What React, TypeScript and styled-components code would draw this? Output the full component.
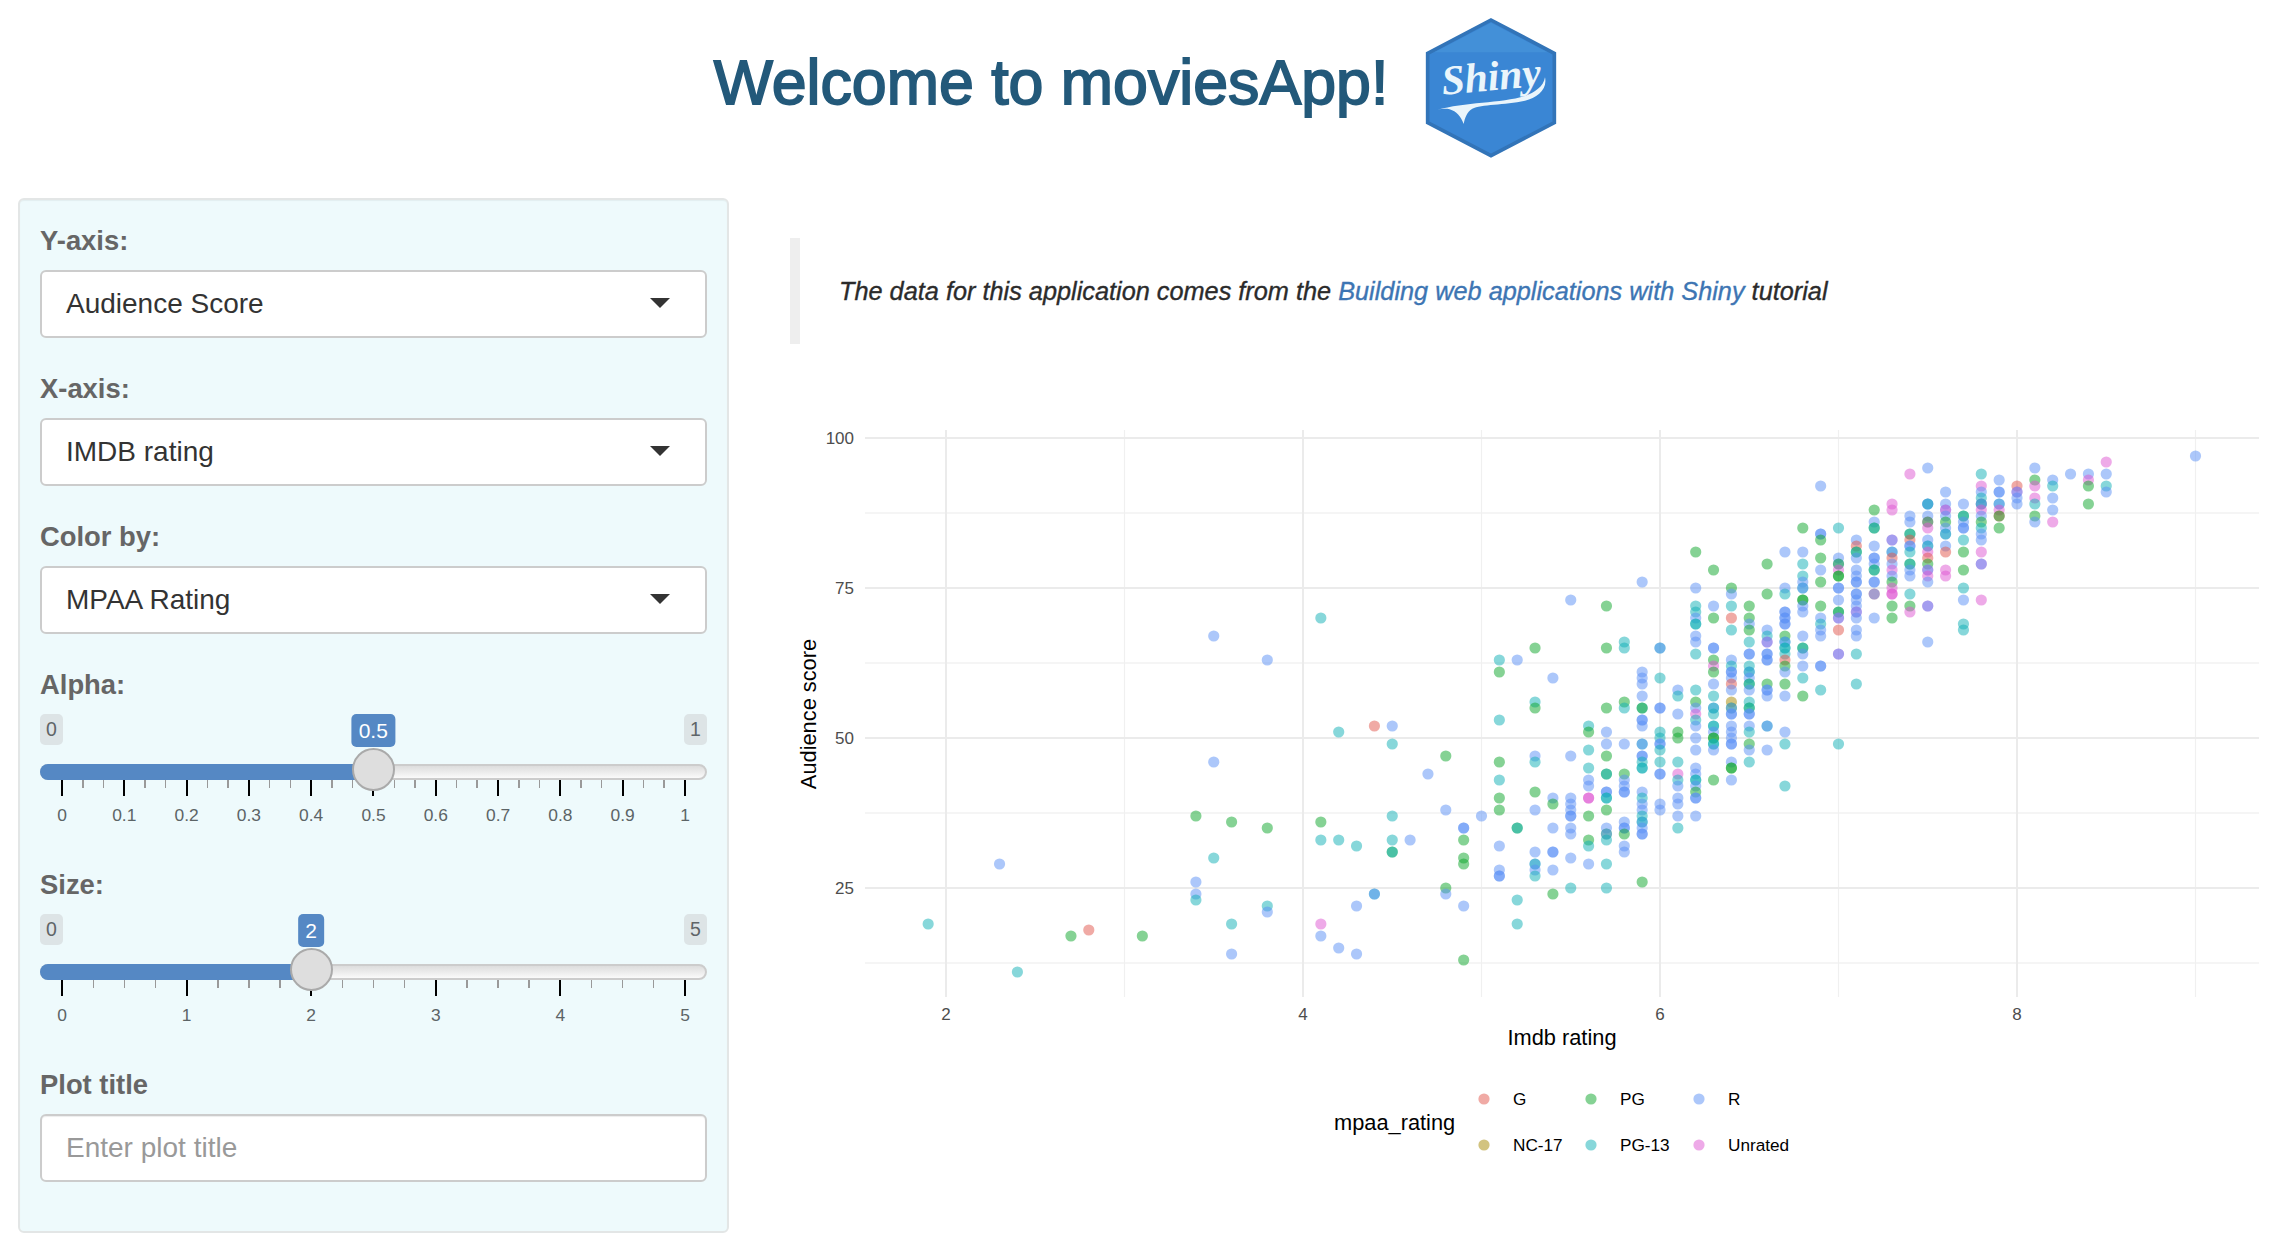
import React from "react";
import styled, { createGlobalStyle } from "styled-components";

const Global = createGlobalStyle`
  html, body { margin: 0; padding: 0; background: #fff; }
  body { font-family: "Liberation Sans", Arial, sans-serif; color: #333; }
`;

const Page = styled.div`
  width: 2276px;
  height: 1250px;
  overflow: hidden;
`;
const Header = styled.header`
  height: 198px;
  display: flex;
  justify-content: center;
  align-items: flex-start;
  gap: 31px;
  padding-right: 3px;
  box-sizing: border-box;
`;
const Title = styled.h1`
  margin: 45px 0 0;
  padding: 0 2px;
  font-size: 62.7px;
  line-height: 74px;
  font-weight: 400;
  color: #23597a;
  -webkit-text-stroke: 1.8px #23597a;
  white-space: nowrap;
`;
const LogoSvg = styled.svg`
  width: 140px;
  height: 148px;
  margin-top: 14px;
  flex: none;
`;
const Main = styled.main`
  display: flex;
  align-items: flex-start;
`;
const Panel = styled.aside`
  flex: none;
  width: 711px;
  height: 1035px;
  margin-left: 18px;
  box-sizing: border-box;
  padding: 24px 20px 0 20px;
  background: #eefafc;
  border: 2px solid #e3e6e6;
  border-radius: 6px;
  box-shadow: inset 0 1px 1px rgba(0, 0, 0, 0.05);
`;
const Label = styled.div`
  height: 34px;
  line-height: 34px;
  font-size: 27.4px;
  font-weight: 700;
  color: #666;
  margin-bottom: 12px;
`;
const Field = styled.div`
  margin-bottom: 34px;
`;
const Select = styled.div`
  height: 68px;
  box-sizing: border-box;
  border: 2px solid #ccc;
  border-radius: 6px;
  background: #fff;
  padding: 0 35px 0 24px;
  display: flex;
  align-items: center;
  justify-content: space-between;
  font-size: 28px;
  color: #333;
`;
const Caret = styled.span`
  width: 0;
  height: 0;
  margin: 0 0 2px;
  border-left: 10px solid transparent;
  border-right: 10px solid transparent;
  border-top: 10px solid #333;
`;
const SliderField = styled.div`
  margin-bottom: 43px;
`;
const BoundRow = styled.div`
  display: flex;
  justify-content: space-between;
`;
const Bound = styled.span`
  height: 31px;
  min-width: 23px;
  box-sizing: border-box;
  padding: 0 5px;
  background: #dde4e6;
  color: #5f6568;
  border-radius: 5px;
  font-size: 19.5px;
  line-height: 30px;
  text-align: center;
`;
const Track = styled.div`
  position: relative;
  height: 16px;
  margin-top: 19px;
  box-sizing: border-box;
  border: 2px solid #ccc;
  border-radius: 8px;
  background: linear-gradient(#ddd, #fafafa);
`;
const Fill = styled.div`
  position: absolute;
  left: -2px;
  top: -2px;
  height: 16px;
  background: #5588c4;
  border-radius: 8px 0 0 8px;
`;
const Thumb = styled.div`
  position: absolute;
  top: -18px;
  width: 43px;
  height: 43px;
  box-sizing: border-box;
  margin-left: -21.5px;
  background: #dedede;
  border: 2px solid #aaa;
  border-radius: 50%;
`;
const Bubble = styled.div`
  position: absolute;
  top: -52px;
  height: 33px;
  min-width: 23px;
  box-sizing: border-box;
  padding: 0 7px;
  transform: translateX(-50%);
  background: #5588c4;
  color: #fff;
  border-radius: 5px;
  font-size: 21px;
  line-height: 33px;
  text-align: center;
`;
const TickRow = styled.div`
  display: flex;
  justify-content: space-between;
  align-items: flex-start;
  height: 16px;
  padding: 0 21px;
`;
const Tick = styled.i<{ $major: boolean }>`
  display: block;
  width: ${(p) => (p.$major ? 2 : 1.5)}px;
  height: ${(p) => (p.$major ? 16 : 8)}px;
  background: ${(p) => (p.$major ? "#000" : "#999")};
`;
const TickLabels = styled.div`
  display: flex;
  justify-content: space-between;
  margin-top: 9px;
  padding: 0 22px;
  height: 20px;
`;
const TickLabel = styled.span`
  width: 0;
  display: flex;
  justify-content: center;
  white-space: nowrap;
  font-size: 17.4px;
  line-height: 20px;
  color: #5c6466;
`;
const TextInput = styled.input`
  display: block;
  width: 100%;
  height: 68px;
  box-sizing: border-box;
  border: 2px solid #ccc;
  border-radius: 6px;
  background: #fff;
  padding: 0 24px;
  font-family: "Liberation Sans", Arial, sans-serif;
  font-size: 28px;
  box-shadow: inset 0 1px 1px rgba(0, 0, 0, 0.075);
  &::placeholder { color: #999; opacity: 1; }
`;
const Content = styled.section`
  flex: 1;
  min-width: 0;
  margin-left: 61px;
  padding-top: 40px;
  display: flex;
  flex-direction: column;
`;
const Quote = styled.blockquote`
  margin: 0 0 36px;
  height: 106px;
  box-sizing: border-box;
  border-left: 10px solid #eee;
  padding: 0 0 0 39px;
  display: flex;
  align-items: center;
`;
const QuoteText = styled.p`
  margin: 0;
  font-size: 25.3px;
  font-style: italic;
  color: #2b2b2b;
  -webkit-text-stroke: 0.35px currentColor;
  white-space: nowrap;
`;
const QuoteLink = styled.a`
  color: #3d75b3;
  text-decoration: none;
`;
const PlotSvg = styled.svg`
  display: block;
  width: 1486px;
  height: 860px;
`;

const COLORS: Record<string, string> = {
  G: "#E1554B",
  N: "#A58700",
  P: "#0BA529",
  T: "#0FAFB5",
  R: "#598FF5",
  U: "#DD55D1",
};

const COLUMNS: [number, string][] = [
  [1.9, "T19"],
  [2.3, "R29"],
  [2.4, "T11"],
  [2.7, "P17"],
  [2.8, "G18"],
  [3.1, "P17"],
  [3.4, "P37 R26 R24 T23"],
  [3.5, "R67 R46 T30"],
  [3.6, "P36 T19 R14"],
  [3.8, "R63 P35 T22 R21"],
  [4.1, "T70 P36 T33 U19 R17"],
  [4.2, "T51 T33 R15"],
  [4.3, "T32 R22 R14"],
  [4.4, "G52 T24 R24"],
  [4.5, "R52 T49 T37 T33 P31 T31"],
  [4.6, "R33"],
  [4.7, "R44"],
  [4.8, "P47 R38 P25 R24"],
  [4.9, "R35 R35 P33 P30 P29 R22 P13"],
  [5.0, "R37"],
  [5.1, "T63 P61 T53 P46 T43 P40 P38 R32 R28 R27 R27"],
  [5.2, "R63 P35 T35 T23 T19"],
  [5.3, "P65 T56 P55 R47 T46 P41 R38 R31 R29 T29 R28 T27"],
  [5.4, "R60 R40 P39 R35 R31 R31 R28 P24"],
  [5.5, "R73 R47 R40 R39 R38 R37 R37 R35 R34 R30 T25"],
  [5.6, "T52 P51 T48 T45 R43 R42 U40 U40 P37 P33 T32 R29"],
  [5.7, "P72 P65 P55 R51 R49 P47 P44 T44 R41 R41 T40 T40 P38 R35 P34 R34 T33 T29 T25"],
  [5.8, "T66 T65 P56 T55 R49 P44 R43 R42 R41 R41 R36 R35 R35 P34 R32 R31"],
  [5.9, "R76 R61 R60 R59 R57 T55 P55 R53 R53 R52 T49 R49 R47 R47 T46 T45 T45 R41 T40 R39 R38 T37 R36 T36 R35 R34 R34 P26"],
  [6.0, "T65 R65 T60 R55 R55 T51 T50 R49 R49 T48 T46 R44 R44 R39 R38"],
  [6.1, "R58 T57 R54 P51 P50 T46 U44 T43 R42 R40 R39 R37 T35"],
  [6.2, "P81 R75 T72 T71 R70 T69 T69 R67 R66 T64 T58 P56 R55 U54 T53 R52 R50 R48 R45 R44 T43 T43 R42 P41 R40 R40 R37"],
  [6.3, "P78 R72 P70 R65 R65 P63 U62 P61 R59 T57 R55 T55 T54 T52 T52 R51 P50 P50 T49 T49 R48 P43"],
  [6.4, "P75 R74 T72 G70 T68 R63 T62 R61 R61 R60 G59 R58 N56 P55 R55 R54 R54 R52 R51 R50 R49 R49 R46 P45 P45 R43"],
  [6.5, "P72 P70 R69 P68 T66 R64 R64 T62 R61 T61 R60 P59 T59 R58 T56 P55 T55 R54 R54 R52 T51 P49 R48 T46"],
  [6.6, "P79 P74 R68 T67 U66 R66 R64 R64 R63 R63 P59 R58 R58 R57 T52 R52 R48"],
  [6.7, "R81 R75 T74 R71 R71 R70 R70 R69 R69 P67 T66 R66 T65 T65 T64 G63 P62 R61 P59 R57 R51 T49 T42"],
  [6.8, "P85 R81 T79 T77 R76 T75 R75 P73 P73 R72 R71 R67 P65 T65 R64 R62 T60 P57"],
  [6.9, "R92 R84 R84 P83 P80 R78 P76 P72 R70 T69 R68 R67 R62 R62 T58"],
  [7.0, "T85 R80 R79 P79 U78 P77 P77 R75 R75 R73 T71 P71 U70 R70 G68 U64 R64 T49"],
  [7.1, "R83 G82 P81 T81 R80 R78 R77 R76 R76 R74 R74 R73 R72 U71 R71 R70 R68 R67 T64 T59"],
  [7.2, "P88 R86 P85 T85 R82 R80 R80 R79 P78 T78 R76 R76 G74 R74 R70"],
  [7.3, "U89 U88 U83 R83 T81 R81 G80 R79 U78 R77 P76 U75 U74 U74 P72 P70"],
  [7.4, "U94 R87 R86 P84 T84 G83 R82 R82 T81 P79 T79 R78 R77 T74 P72 U71"],
  [7.5, "R95 R89 R89 T89 R87 U86 P86 U85 R83 R82 T82 U81 G80 P79 U78 R78 U77 R76 U72 R72 R66"],
  [7.6, "R91 R89 R88 U88 R87 P86 R85 R84 T84 R82 G81 U78 U77"],
  [7.7, "R89 P87 T87 R86 R85 R85 T83 P81 P78 T75 R73 T69 T68"],
  [7.8, "T94 U92 R91 T90 U89 R89 T89 U88 R87 P86 T85 R84 R83 U81 U79 R79 U73"],
  [7.9, "R93 R91 R91 T89 R89 U88 G87 P87 P85"],
  [8.0, "G92 U91 R91 R90 R89"],
  [8.1, "R95 P93 U92 U90 T89 P87 R86"],
  [8.2, "R93 T92 R90 R88 U86"],
  [8.3, "R94"],
  [8.4, "R94 U93 P92 P89"],
  [8.5, "U96 R94 T92 R91"],
  [9.0, "R97"],
];

const px = (r: number) => 946 + (r - 2) * 178.5;
const py = (s: number) => 438 + (100 - s) * 6;

const POINTS = COLUMNS.flatMap(([r, list]) =>
  list.split(" ").map((t) => ({ x: px(r), y: py(Number(t.slice(1))), fill: COLORS[t[0]] }))
);

const LEGEND = [
  { key: "G", label: "G", x: 1484, y: 1099 },
  { key: "N", label: "NC-17", x: 1484, y: 1145 },
  { key: "P", label: "PG", x: 1591, y: 1099 },
  { key: "T", label: "PG-13", x: 1591, y: 1145 },
  { key: "R", label: "R", x: 1699, y: 1099 },
  { key: "U", label: "Unrated", x: 1699, y: 1145 },
];

const ShinyLogo = () => (
  <LogoSvg viewBox="1420 14 140 148" aria-label="Shiny">
    <g transform="translate(1400 0) scale(0.33333)">
      <polygon points="270,60 460,160 460,368 270,467 80,368 80,160" fill="#3a86d4" stroke="#3274b8" strokeWidth="11" />
      <polygon points="270,68 440,157 100,157" fill="#4692d8" opacity="0.8" />
      <text
        x="125"
        y="284"
        fontFamily="Liberation Serif, serif"
        fontStyle="italic"
        fontWeight="700"
        fontSize="125"
        fill="#eaf5fb"
        transform="rotate(-5 125 284)"
      >
        Shiny
      </text>
      <path
        d="M108 330 C190 306 300 310 372 288 C400 278 428 260 432 232 C440 268 408 294 372 302 C310 316 240 312 214 326 C198 336 192 352 188 372 C180 350 166 334 146 328 C132 325 120 327 108 330 Z"
        fill="#eaf5fb"
      />
    </g>
  </LogoSvg>
);

const Plot = () => (
  <PlotSvg viewBox="790 380 1486 860" fontFamily="Liberation Sans, Arial, sans-serif">
    {[513, 663, 813, 963].map((y) => (
      <line key={y} x1={865} x2={2259} y1={y} y2={y} stroke="#f2f2f2" strokeWidth="1.4" />
    ))}
    {[3, 5, 7, 9].map((r) => (
      <line key={r} x1={px(r)} x2={px(r)} y1={430} y2={997} stroke="#f0f0f0" strokeWidth="1.2" />
    ))}
    {[438, 588, 738, 888].map((y) => (
      <line key={y} x1={865} x2={2259} y1={y} y2={y} stroke="#ebebeb" strokeWidth="2" />
    ))}
    {[2, 4, 6, 8].map((r) => (
      <line key={r} x1={px(r)} x2={px(r)} y1={430} y2={997} stroke="#ebebeb" strokeWidth="2" />
    ))}
    {POINTS.map((p, i) => (
      <circle key={i} cx={p.x} cy={p.y} r={5.6} fill={p.fill} fillOpacity={0.5} />
    ))}
    {[100, 75, 50, 25].map((s) => (
      <text key={s} x={854} y={py(s) + 6} textAnchor="end" fontSize="17" fill="#4d4d4d">
        {s}
      </text>
    ))}
    {[2, 4, 6, 8].map((r) => (
      <text key={r} x={px(r)} y={1020} textAnchor="middle" fontSize="17" fill="#4d4d4d">
        {r}
      </text>
    ))}
    <text x={1562} y={1045} textAnchor="middle" fontSize="21.8" fill="#000">
      Imdb rating
    </text>
    <text transform="translate(816 714) rotate(-90)" textAnchor="middle" fontSize="21.8" fill="#000">
      Audience score
    </text>
    <text x={1334} y={1130} fontSize="21.8" fill="#000">
      mpaa_rating
    </text>
    {LEGEND.map((l) => (
      <g key={l.key}>
        <circle cx={l.x} cy={l.y} r={5.6} fill={COLORS[l.key]} fillOpacity={0.5} />
        <text x={l.x + 29} y={l.y + 6} fontSize="17.2" fill="#000">
          {l.label}
        </text>
      </g>
    ))}
  </PlotSvg>
);

type SliderProps = {
  label: string;
  min: string;
  max: string;
  value: string;
  fraction: number;
  labels: string[];
  minors: number;
};

const Slider = ({ label, min, max, value, fraction, labels, minors }: SliderProps) => {
  const center = 22 + fraction * 622.6;
  const count = (labels.length - 1) * minors + 1;
  return (
    <SliderField>
      <Label>{label}</Label>
      <BoundRow>
        <Bound>{min}</Bound>
        <Bound>{max}</Bound>
      </BoundRow>
      <Track>
        <Fill style={{ width: center + 2 }} />
        <Thumb style={{ left: center - 2 }} />
        <Bubble style={{ left: center - 2 }}>{value}</Bubble>
      </Track>
      <TickRow>
        {Array.from({ length: count }, (_, i) => (
          <Tick key={i} $major={i % minors === 0} />
        ))}
      </TickRow>
      <TickLabels>
        {labels.map((t, i) => (
          <TickLabel key={i}>{t}</TickLabel>
        ))}
      </TickLabels>
    </SliderField>
  );
};

const SELECTS = [
  { label: "Y-axis:", value: "Audience Score" },
  { label: "X-axis:", value: "IMDB rating" },
  { label: "Color by:", value: "MPAA Rating" },
];

export default function App() {
  return (
    <Page>
      <Global />
      <Header>
        <Title>Welcome to moviesApp!</Title>
        <ShinyLogo />
      </Header>
      <Main>
        <Panel>
          {SELECTS.map((s) => (
            <Field key={s.label}>
              <Label>{s.label}</Label>
              <Select>
                {s.value}
                <Caret />
              </Select>
            </Field>
          ))}
          <Slider
            label="Alpha:"
            min="0"
            max="1"
            value="0.5"
            fraction={0.5}
            labels={["0", "0.1", "0.2", "0.3", "0.4", "0.5", "0.6", "0.7", "0.8", "0.9", "1"]}
            minors={3}
          />
          <Slider
            label="Size:"
            min="0"
            max="5"
            value="2"
            fraction={0.4}
            labels={["0", "1", "2", "3", "4", "5"]}
            minors={4}
          />
          <Label>Plot title</Label>
          <TextInput placeholder="Enter plot title" />
        </Panel>
        <Content>
          <Quote>
            <QuoteText>
              The data for this application comes from the{" "}
              <QuoteLink href="#">Building web applications with Shiny</QuoteLink> tutorial
            </QuoteText>
          </Quote>
          <Plot />
        </Content>
      </Main>
    </Page>
  );
}
